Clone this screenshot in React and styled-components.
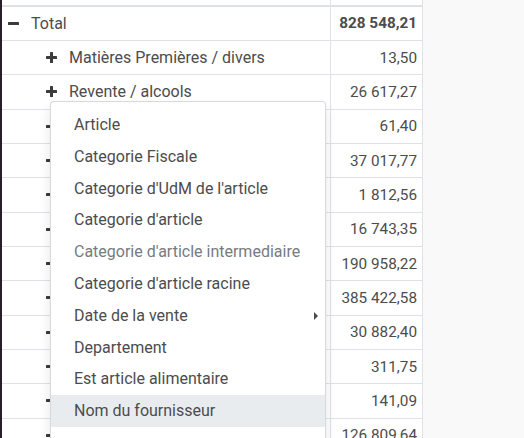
import React from "react";
import styled, { createGlobalStyle } from "styled-components";

const Global = createGlobalStyle`
  html, body { margin: 0; padding: 0; overflow: hidden; background: #f9f9f9; }
  body { font-family: Roboto, "Liberation Sans", sans-serif; font-size: 16px; color: #4c4c4c; }
`;

const Page = styled.div`
  display: flex;
  height: 438px;
  position: relative;
  overflow: hidden;
`;

const SideBar = styled.div`
  width: 2px;
  flex: none;
  background: #261f29;
`;

const Table = styled.div`
  width: 420px;
  flex: none;
  background: #fff;
  border-right: 1px solid #dee2e6;
  align-self: flex-start;
`;

const Row = styled.div`
  display: flex;
  box-sizing: border-box;
  height: ${(p) => (p.$head ? "6.67px" : "34.33px")};
  border-bottom: ${(p) => (p.$head ? "2px" : "1px")} solid #dee2e6;
`;

const LabelCell = styled.div`
  width: 328px;
  flex: none;
  display: flex;
  align-items: center;
  box-sizing: border-box;
  padding-left: ${(p) => 6 + p.$level * 38}px;
  white-space: nowrap;
  overflow: hidden;
`;

const ValueCell = styled.div`
  flex: 1;
  border-left: 1px solid #dee2e6;
  display: flex;
  align-items: center;
  justify-content: flex-end;
  padding-right: 5px;
  font-size: 15.3px;
  font-weight: ${(p) => (p.$bold ? 700 : 400)};
`;

const IconBox = styled.span`
  width: 11px;
  height: 11px;
  margin-right: 12px;
  flex: none;
  display: inline-flex;
`;

const Menu = styled.div`
  position: absolute;
  left: 50px;
  top: 101px;
  width: 276px;
  box-sizing: border-box;
  background: #fff;
  border: 1px solid rgba(0, 0, 0, 0.15);
  border-radius: 4px;
  padding: 7px 0 40px;
  box-shadow: 0 6px 12px rgba(0, 0, 0, 0.1);
`;

const Item = styled.div`
  position: relative;
  height: 31.8px;
  line-height: 31.8px;
  padding: 0 23px;
  white-space: nowrap;
  color: ${(p) => (p.$disabled ? "#777b7f" : "#4c4c4c")};
  background: ${(p) => (p.$active ? "#e9ecef" : "transparent")};
`;

const Caret = styled.span`
  position: absolute;
  right: 7px;
  top: 12px;
  width: 0;
  height: 0;
  border-top: 4px solid transparent;
  border-bottom: 4px solid transparent;
  border-left: 4px solid #4c4c4c;
`;

const Minus = () => (
  <svg width="11" height="11" viewBox="0 0 11 11">
    <rect x="0" y="4" width="11" height="3" rx="0.5" fill="#3b3b3b" />
  </svg>
);
const Plus = () => (
  <svg width="11" height="11" viewBox="0 0 11 11">
    <rect x="0" y="4" width="11" height="3" rx="0.5" fill="#3b3b3b" />
    <rect x="4" y="0" width="3" height="11" rx="0.5" fill="#3b3b3b" />
  </svg>
);

const rows = [
  { label: "Total", value: "828 548,21", level: 0, open: true, bold: true },
  { label: "Matières Premières / divers", value: "13,50", level: 1 },
  { label: "Revente / alcools", value: "26 617,27", level: 1 },
  { label: "", value: "61,40", level: 1 },
  { label: "", value: "37 017,77", level: 1 },
  { label: "", value: "1 812,56", level: 1 },
  { label: "", value: "16 743,35", level: 1 },
  { label: "", value: "190 958,22", level: 1 },
  { label: "", value: "385 422,58", level: 1 },
  { label: "", value: "30 882,40", level: 1 },
  { label: "", value: "311,75", level: 1 },
  { label: "", value: "141,09", level: 1 },
  { label: "", value: "126 809,64", level: 1 },
];

const items = [
  { t: "Article" },
  { t: "Categorie Fiscale" },
  { t: "Categorie d'UdM de l'article" },
  { t: "Categorie d'article" },
  { t: "Categorie d'article intermediaire", disabled: true },
  { t: "Categorie d'article racine" },
  { t: "Date de la vente", sub: true },
  { t: "Departement" },
  { t: "Est article alimentaire" },
  { t: "Nom du fournisseur", active: true },
];

export default function App() {
  return (
    <>
      <Global />
      <Page>
        <SideBar />
        <Table>
          <Row $head>
            <LabelCell $level={0} />
            <ValueCell />
          </Row>
          {rows.map((r, i) => (
            <Row key={i}>
              <LabelCell $level={r.level}>
                <IconBox>{r.open ? <Minus /> : <Plus />}</IconBox>
                {r.label}
              </LabelCell>
              <ValueCell $bold={r.bold}>{r.value}</ValueCell>
            </Row>
          ))}
        </Table>
        <Menu>
          {items.map((it, i) => (
            <Item key={i} $disabled={it.disabled} $active={it.active}>
              {it.t}
              {it.sub && <Caret />}
            </Item>
          ))}
        </Menu>
      </Page>
    </>
  );
}
